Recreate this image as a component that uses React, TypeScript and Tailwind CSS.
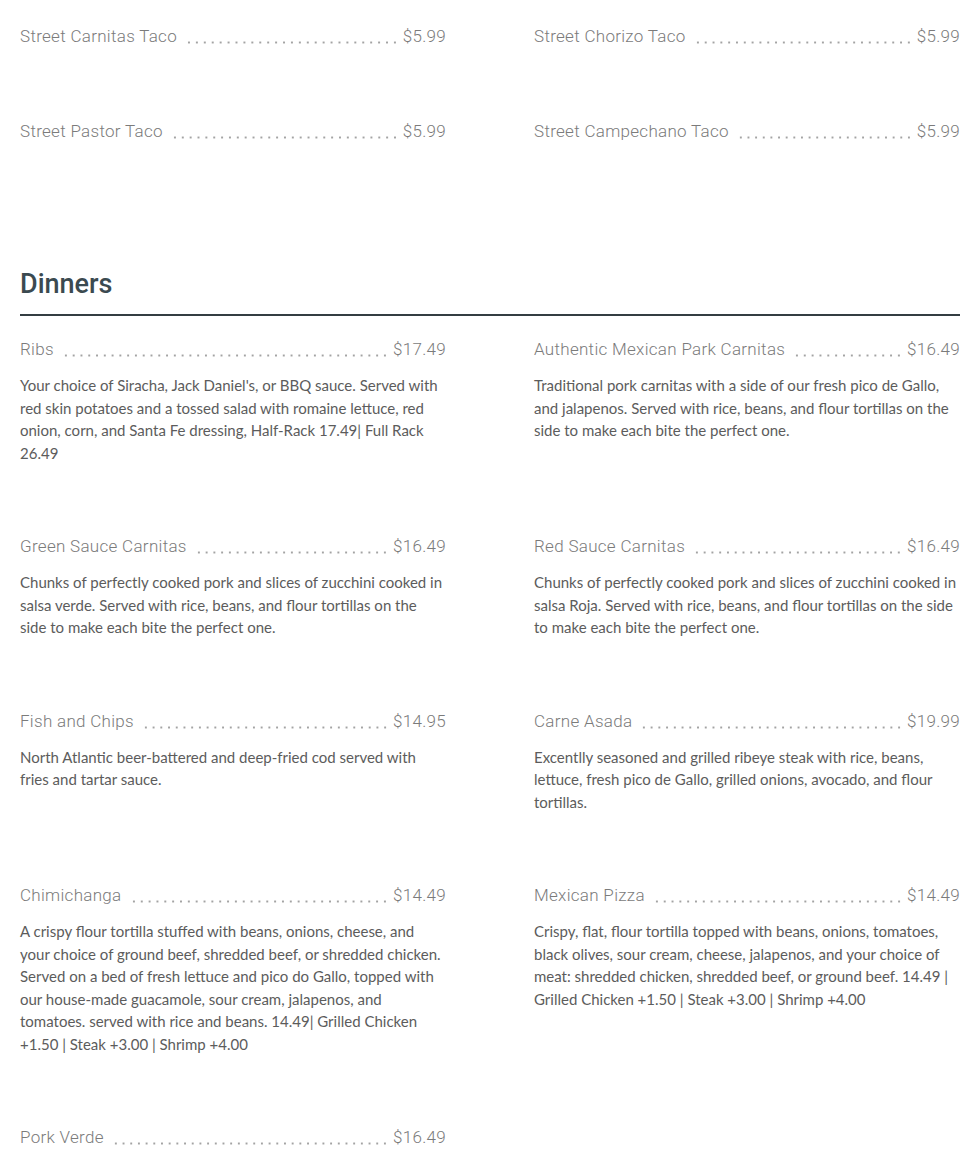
import React from "react";

interface Item {
  name: string;
  price: string;
  desc?: string;
}

const tacos: Item[] = [
  { name: "Street Carnitas Taco", price: "$5.99" },
  { name: "Street Chorizo Taco", price: "$5.99" },
  { name: "Street Pastor Taco", price: "$5.99" },
  { name: "Street Campechano Taco", price: "$5.99" },
];

const dinners: Item[] = [
  {
    name: "Ribs",
    price: "$17.49",
    desc: "Your choice of Siracha, Jack Daniel's, or BBQ sauce. Served with red skin potatoes and a tossed salad with romaine lettuce, red onion, corn, and Santa Fe dressing, Half-Rack 17.49| Full Rack 26.49",
  },
  {
    name: "Authentic Mexican Park Carnitas",
    price: "$16.49",
    desc: "Traditional pork carnitas with a side of our fresh pico de Gallo, and jalapenos. Served with rice, beans, and flour tortillas on the side to make each bite the perfect one.",
  },
  {
    name: "Green Sauce Carnitas",
    price: "$16.49",
    desc: "Chunks of perfectly cooked pork and slices of zucchini cooked in salsa verde. Served with rice, beans, and flour tortillas on the side to make each bite the perfect one.",
  },
  {
    name: "Red Sauce Carnitas",
    price: "$16.49",
    desc: "Chunks of perfectly cooked pork and slices of zucchini cooked in salsa Roja. Served with rice, beans, and flour tortillas on the side to make each bite the perfect one.",
  },
  {
    name: "Fish and Chips",
    price: "$14.95",
    desc: "North Atlantic beer-battered and deep-fried cod served with fries and tartar sauce.",
  },
  {
    name: "Carne Asada",
    price: "$19.99",
    desc: "Excentlly seasoned and grilled ribeye steak with rice, beans, lettuce, fresh pico de Gallo, grilled onions, avocado, and flour tortillas.",
  },
  {
    name: "Chimichanga",
    price: "$14.49",
    desc: "A crispy flour tortilla stuffed with beans, onions, cheese, and your choice of ground beef, shredded beef, or shredded chicken. Served on a bed of fresh lettuce and pico do Gallo, topped with our house-made guacamole, sour cream, jalapenos, and tomatoes. served with rice and beans. 14.49| Grilled Chicken +1.50 | Steak +3.00 | Shrimp +4.00",
  },
  {
    name: "Mexican Pizza",
    price: "$14.49",
    desc: "Crispy, flat, flour tortilla topped with beans, onions, tomatoes, black olives, sour cream, cheese, jalapenos, and your choice of meat: shredded chicken, shredded beef, or ground beef. 14.49 | Grilled Chicken +1.50 | Steak +3.00 | Shrimp +4.00",
  },
  { name: "Pork Verde", price: "$16.49" },
];

function MenuItem({ item }: { item: Item }) {
  return (
    <div className="pb-[71px]">
      <div className="flex items-center h-6 text-[17px] font-light tracking-[0.3px] text-[#7b7b7b] font-['Roboto',sans-serif]">
        <span className="whitespace-nowrap mr-2">{item.name}</span>
        {/* dotted leader */}
        <span className="flex-1 h-[3px] self-end mb-[5px] bg-[radial-gradient(circle,#a3a3a3_0.9px,transparent_1.3px)] bg-[length:7.8px_3px] bg-repeat-round" />
        <span className="whitespace-nowrap ml-1">{item.price}</span>
      </div>
      {item.desc && (
        <p className="mt-3 text-[15px] leading-[22.5px] text-[#5c5c5c] font-['Lato',sans-serif]">
          {item.desc}
        </p>
      )}
    </div>
  );
}

export default function App() {
  return (
    <div className="w-[965px] bg-white pl-5 pr-[5px] pt-[25px]">
      {/* Street tacos */}
      <div className="grid grid-cols-2 gap-x-[88px]">
        {tacos.map((t) => (
          <MenuItem key={t.name} item={t} />
        ))}
      </div>

      {/* Dinners */}
      <div className="mt-[51px]">
        <h2 className="text-[27px] leading-9 font-medium text-[#3b4a50] font-['Roboto',sans-serif] pb-3">
          Dinners
        </h2>
        <div className="h-[2px] bg-[#343e42] mb-[22px]" />
        <div className="grid grid-cols-2 gap-x-[88px]">
          {dinners.map((d) => (
            <MenuItem key={d.name} item={d} />
          ))}
        </div>
      </div>
    </div>
  );
}
